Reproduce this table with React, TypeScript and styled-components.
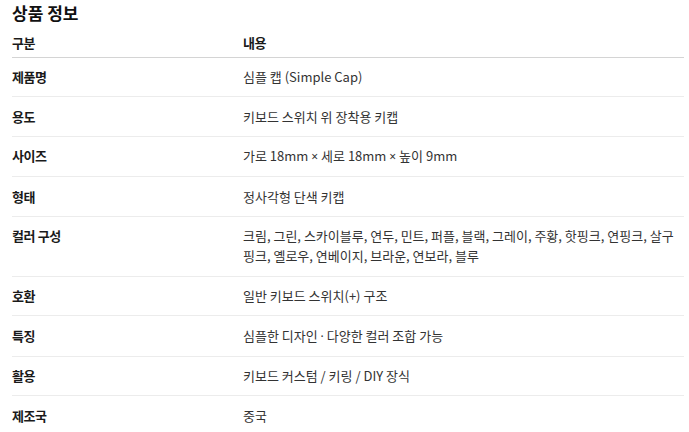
import styled, { createGlobalStyle } from 'styled-components';

const GlobalStyle = createGlobalStyle`
  body {
    margin: 0;
    background: #ffffff;
    font-family: "Noto Sans CJK KR", "Noto Sans", sans-serif;
  }
`

const Page = styled.div`
  padding: 0 5px 0 12px;
`

const Title = styled.h3`
  margin: 1px 0 0;
  font-size: 17px;
  line-height: 24px;
  font-weight: 700;
  color: #111111;
`

const Table = styled.div`
  display: flex;
  flex-direction: column;
  width: 672px;
`

const Row = styled.div<{ $head?: boolean }>`
  display: grid;
  grid-template-columns: 231px 1fr;
  padding: ${props => props.$head ? '7.8px 0 3.9px' : '9.3px 0'};
  border-bottom: 1px solid ${props => props.$head ? '#d4d4d4' : '#ececec'};
  font-size: 13px;
  line-height: 20px;
`

const Label = styled.div`
  font-weight: 700;
  color: #1a1a1a;
  letter-spacing: -0.4px;
`

const Value = styled.div<{ $head?: boolean }>`
  font-weight: ${props => props.$head ? 700 : 400};
  color: ${props => props.$head ? '#1a1a1a' : '#333333'};
  letter-spacing: ${props => props.$head ? '-0.4px' : '0'};
  word-break: keep-all;
`

// × and · are full width in the CJK font, the reference draws them narrow
const Sym = styled.span`
  font-family: "Noto Sans", "DejaVu Sans", sans-serif;
  font-size: 12px;
`

const rows: [string, string][] = [
  ["제품명", "심플 캡 (Simple Cap)"],
  ["용도", "키보드 스위치 위 장착용 키캡"],
  ["사이즈", "가로 18mm × 세로 18mm × 높이 9mm"],
  ["형태", "정사각형 단색 키캡"],
  ["컬러 구성", "크림, 그린, 스카이블루, 연두, 민트, 퍼플, 블랙, 그레이, 주황, 핫핑크, 연핑크, 살구 핑크, 옐로우, 연베이지, 브라운, 연보라, 블루"],
  ["호환", "일반 키보드 스위치(+) 구조"],
  ["특징", "심플한 디자인 · 다양한 컬러 조합 가능"],
  ["활용", "키보드 커스텀 / 키링 / DIY 장식"],
  ["제조국", "중국"],
]

function renderText(text: string) {
  return text.split(/([×·])/).map((part, i) =>
    part === "×" || part === "·" ? <Sym key={i}>{part}</Sym> : part
  )
}

export default function App() {
  return (
    <Page>
      <GlobalStyle />
      <Title>상품 정보</Title>
      <Table>
        <Row $head>
          <Label>구분</Label>
          <Value $head>내용</Value>
        </Row>
        {rows.map(([label, value]) => (
          <Row key={label}>
            <Label>{label}</Label>
            <Value>{renderText(value)}</Value>
          </Row>
        ))}
      </Table>
    </Page>
  )
}
